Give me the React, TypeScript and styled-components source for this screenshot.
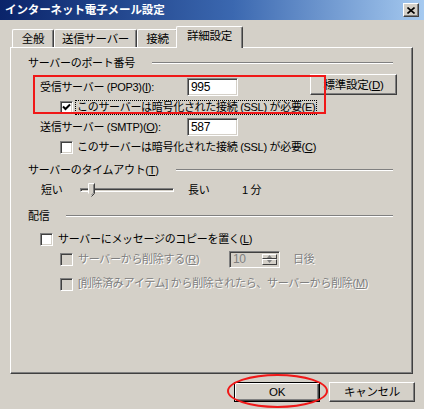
import React from 'react';
import styled, { createGlobalStyle } from 'styled-components';

const FONT = `"Liberation Sans", "Noto Sans CJK JP", sans-serif`;

const Global = createGlobalStyle`
  html, body { margin: 0; padding: 0; background: #D4D0C8; }
  body { width: 424px; height: 409px; overflow: hidden; }
  * { box-sizing: border-box; }
`;

const Window = styled.div`
  position: relative;
  width: 424px;
  height: 409px;
  background: #D4D0C8;
  font-family: ${FONT};
  font-size: 11px;
  letter-spacing: -0.3px;
  color: #000;
  display: flex;
  flex-direction: column;
  overflow: hidden;
`;

const TitleBar = styled.div`
  height: 20px;
  flex: none;
  display: flex;
  align-items: center;
  padding: 0 5px 0 5px;
  background: linear-gradient(to right, #0A246A 0%, #3B68B0 55%, #A6CAF0 100%);
`;

const TitleText = styled.div`
  flex: 1;
  color: #fff;
  font-weight: bold;
  font-size: 11.5px;
  letter-spacing: -0.1px;
  line-height: 20px;
`;

const CloseButton = styled.div`
  width: 16px;
  height: 14px;
  background: #D4D0C8;
  border: 1px solid;
  border-color: #fff #404040 #404040 #fff;
  box-shadow: inset -1px -1px #808080;
  display: flex;
  align-items: center;
  justify-content: center;
`;

const Body = styled.div`
  flex: 1;
  display: flex;
  flex-direction: column;
  padding: 0 11px 0 10px;
`;

const TabRow = styled.div`
  height: 27px;
  flex: none;
  display: flex;
  align-items: flex-end;
  padding-left: 2px;
`;

const Tab = styled.div<{ $w: number; $active?: boolean }>`
  position: relative;
  width: ${(p) => p.$w}px;
  height: ${(p) => (p.$active ? 22 : 18)}px;
  margin: ${(p) => (p.$active ? '0 -2px -1px -2px' : '0')};
  z-index: ${(p) => (p.$active ? 2 : 1)};
  background: #D4D0C8;
  border-top: 1px solid #fff;
  border-left: 1px solid #fff;
  border-right: 1px solid #404040;
  box-shadow: inset -1px 0 #808080;
  border-radius: 2px 2px 0 0;
  display: flex;
  justify-content: center;
  padding-top: 2px;
  font-size: 11.5px;
  line-height: 14px;
`;

const Panel = styled.div`
  position: relative;
  height: 327px;
  flex: none;
  border: 1px solid;
  border-color: #fff #404040 #404040 #fff;
  box-shadow: inset -1px -1px #808080;
  padding: 8px 19px 0 17px;
  display: flex;
  flex-direction: column;
`;

const GroupTitle = styled.div<{ $mt?: number }>`
  height: 14px;
  line-height: 14px;
  margin-top: ${(p) => p.$mt ?? 0}px;
  display: flex;
  align-items: center;
`;

const Rule = styled.div`
  flex: 1;
  height: 2px;
  margin-left: 17px;
  border-top: 1px solid #808080;
  border-bottom: 1px solid #fff;
`;

const Row = styled.div<{ $mt: number; $h: number; $pl: number; $gap?: number }>`
  display: flex;
  align-items: center;
  height: ${(p) => p.$h}px;
  margin-top: ${(p) => p.$mt}px;
  padding-left: ${(p) => p.$pl}px;
  gap: ${(p) => p.$gap ?? 0}px;
  white-space: nowrap;
`;

const Label = styled.span<{ $w?: number; $disabled?: boolean; $focus?: boolean; $ml?: number }>`
  display: inline-block;
  ${(p) => (p.$w ? `width: ${p.$w}px; flex: none;` : '')}
  margin-left: ${(p) => p.$ml ?? 0}px;
  line-height: 13px;
  color: ${(p) => (p.$disabled ? '#808080' : '#000')};
  text-shadow: ${(p) => (p.$disabled ? '1px 1px 0 #fff' : 'none')};
  outline: ${(p) => (p.$focus ? '1px dotted #000' : 'none')};
  padding: 0 1px;
`;

const TextInput = styled.div<{ $disabled?: boolean; $h?: number }>`
  position: relative;
  width: 51px;
  height: ${(p) => p.$h ?? 18}px;
  flex: none;
  background: ${(p) => (p.$disabled ? '#D4D0C8' : '#fff')};
  color: ${(p) => (p.$disabled ? '#808080' : '#000')};
  border: 1px solid;
  border-color: #808080 #fff #fff #808080;
  box-shadow: inset 1px 1px #404040, inset -1px -1px #D4D0C8;
  padding: 0 3px;
  font-size: 12px;
  line-height: ${(p) => (p.$h ?? 18) - 2}px;
`;

const Button = styled.div<{ $w: number; $h: number; $default?: boolean; $ml?: number; $mt?: number }>`
  width: ${(p) => p.$w}px;
  height: ${(p) => p.$h}px;
  flex: none;
  align-self: ${(p) => (p.$mt ? 'flex-start' : 'auto')};
  margin-left: ${(p) => p.$ml ?? 0}px;
  margin-top: ${(p) => p.$mt ?? 0}px;
  background: #D4D0C8;
  border: 1px solid;
  border-color: ${(p) => (p.$default ? '#000' : '#fff #404040 #404040 #fff')};
  box-shadow: ${(p) =>
    p.$default
      ? 'inset 1px 1px #fff, inset -1px -1px #404040, inset -2px -2px #808080'
      : 'inset -1px -1px #808080'};
  display: flex;
  align-items: center;
  justify-content: center;
  font-size: 11.5px;
  line-height: 14px;
`;

const Box = styled.div<{ $disabled?: boolean; $dy?: number }>`
  width: 13px;
  height: 13px;
  flex: none;
  margin-top: ${(p) => (p.$dy ?? 0) * 2}px;
  background: ${(p) => (p.$disabled ? '#D4D0C8' : '#fff')};
  border: 1px solid;
  border-color: #808080 #fff #fff #808080;
  box-shadow: inset 1px 1px #404040, inset -1px -1px #D4D0C8;
  display: flex;
  align-items: center;
  justify-content: center;
`;

const SliderTrack = styled.div`
  position: relative;
  width: 94px;
  height: 14px;
  flex: none;
  margin-right: 13px;
  display: flex;
  align-items: center;
`;

const Groove = styled.div`
  width: 100%;
  height: 4px;
  border: 1px solid;
  border-color: #808080 #fff #fff #808080;
  box-shadow: inset 1px 1px #404040;
  background: #D4D0C8;
`;

const Thumb = styled.svg`
  position: absolute;
  left: 8px;
  top: 0px;
`;

const SpinButtons = styled.div`
  position: absolute;
  right: 2px;
  top: 2px;
  bottom: 2px;
  width: 15px;
  display: flex;
  flex-direction: column;
`;

const SpinHalf = styled.div`
  flex: 1;
  background: #D4D0C8;
  border: 1px solid;
  border-color: #fff #404040 #404040 #fff;
  display: flex;
  align-items: center;
  justify-content: center;
`;

const Footer = styled.div`
  height: 20px;
  flex: none;
  margin-top: 8px;
  display: flex;
  justify-content: flex-end;
  gap: 9px;
  margin-right: -2px;
`;

const RedRect = styled.div`
  position: absolute;
  left: 33px;
  top: 75px;
  width: 293px;
  height: 39px;
  border: 2px solid #F01818;
  pointer-events: none;
`;

const RedEllipse = styled.div`
  position: absolute;
  left: 227px;
  top: 374px;
  width: 101px;
  height: 34px;
  border: 2px solid #F01818;
  border-radius: 50%;
  pointer-events: none;
`;

const Check = () => (
  <svg width="9" height="9" viewBox="0 0 9 9">
    <path d="M1 3.5 L3.5 6 L8 1.5" stroke="#000" strokeWidth="2" fill="none" />
  </svg>
);

const CheckBox = ({ checked, disabled, dy }: { checked?: boolean; disabled?: boolean; dy?: number }) => (
  <Box $disabled={disabled} $dy={dy}>
    {checked ? <Check /> : null}
  </Box>
);

const Arrow = ({ up }: { up?: boolean }) => (
  <svg width="5" height="3" viewBox="0 0 5 3">
    <path d={up ? 'M0 3 L2.5 0 L5 3 Z' : 'M0 0 L2.5 3 L5 0 Z'} fill="#808080" />
  </svg>
);

export default function App() {
  return (
    <>
      <Global />
      <Window>
        <TitleBar>
          <TitleText>インターネット電子メール設定</TitleText>
          <CloseButton>
            <svg width="8" height="7" viewBox="0 0 8 7">
              <path d="M0.5 0.5 L7.5 6.5 M7.5 0.5 L0.5 6.5" stroke="#000" strokeWidth="1.6" />
            </svg>
          </CloseButton>
        </TitleBar>
        <Body>
          <TabRow>
            <Tab $w={42}>全般</Tab>
            <Tab $w={83}>送信サーバー</Tab>
            <Tab $w={41}>接続</Tab>
            <Tab $w={67} $active>
              詳細設定
            </Tab>
          </TabRow>
          <Panel>
            <GroupTitle>
              サーバーのポート番号
              <Rule />
            </GroupTitle>
            <Row $mt={8} $h={18} $pl={11}>
              <Label $w={148}>
                受信サーバー (POP3)(<u>I</u>):
              </Label>
              <TextInput>995</TextInput>
              <Button $w={87} $h={21} $ml={72} $mt={-4}>
                標準設定(<u>D</u>)
              </Button>
            </Row>
            <Row $mt={4} $h={14} $pl={32} $gap={3}>
              <CheckBox checked />
              <Label $focus>
                このサーバーは暗号化された接続 (SSL) が必要(<u>E</u>)
              </Label>
            </Row>
            <Row $mt={4} $h={18} $pl={11}>
              <Label $w={148}>
                送信サーバー (SMTP)(<u>O</u>):
              </Label>
              <TextInput>587</TextInput>
            </Row>
            <Row $mt={4} $h={14} $pl={32} $gap={3}>
              <CheckBox />
              <Label>
                このサーバーは暗号化された接続 (SSL) が必要(<u>C</u>)
              </Label>
            </Row>

            <GroupTitle $mt={9}>
              サーバーのタイムアウト(<u>T</u>)
              <Rule />
            </GroupTitle>
            <Row $mt={6} $h={14} $pl={12}>
              <Label $w={40}>短い</Label>
              <SliderTrack>
                <Groove />
                <Thumb width="7" height="14" viewBox="0 0 7 14">
                  <path d="M0.5 0.5 H6.5 V10.5 L3.5 13.5 L0.5 10.5 Z" fill="#D4D0C8" />
                  <path d="M0.5 10.5 V0.5 H6" stroke="#fff" fill="none" />
                  <path d="M6.5 0.5 V10.5 L3.5 13.5" stroke="#404040" fill="none" />
                  <path d="M5.5 1.5 V10 L3.5 12" stroke="#808080" fill="none" />
                </Thumb>
              </SliderTrack>
              <Label $w={54}>長い</Label>
              <Label>1 分</Label>
            </Row>

            <GroupTitle $mt={12}>
              配信
              <Rule />
            </GroupTitle>
            <Row $mt={9} $h={14} $pl={12} $gap={4}>
              <CheckBox />
              <Label>
                サーバーにメッセージのコピーを置く(<u>L</u>)
              </Label>
            </Row>
            <Row $mt={5} $h={16} $pl={32} $gap={4}>
              <CheckBox disabled />
              <Label $w={148} $disabled>
                サーバーから削除する(<u>R</u>)
              </Label>
              <TextInput $disabled $h={17}>
                10
                <SpinButtons>
                  <SpinHalf>
                    <Arrow up />
                  </SpinHalf>
                  <SpinHalf>
                    <Arrow />
                  </SpinHalf>
                </SpinButtons>
              </TextInput>
              <Label $disabled $ml={8}>
                日後
              </Label>
            </Row>
            <Row $mt={8} $h={16} $pl={32} $gap={4}>
              <CheckBox disabled dy={1} />
              <Label $disabled>
                [削除済みアイテム] から削除されたら、サーバーから削除(<u>M</u>)
              </Label>
            </Row>
          </Panel>
          <Footer>
            <Button $w={86} $h={20} $default>
              OK
            </Button>
            <Button $w={86} $h={20}>
              キャンセル
            </Button>
          </Footer>
        </Body>
        <RedRect />
        <RedEllipse />
      </Window>
    </>
  );
}
